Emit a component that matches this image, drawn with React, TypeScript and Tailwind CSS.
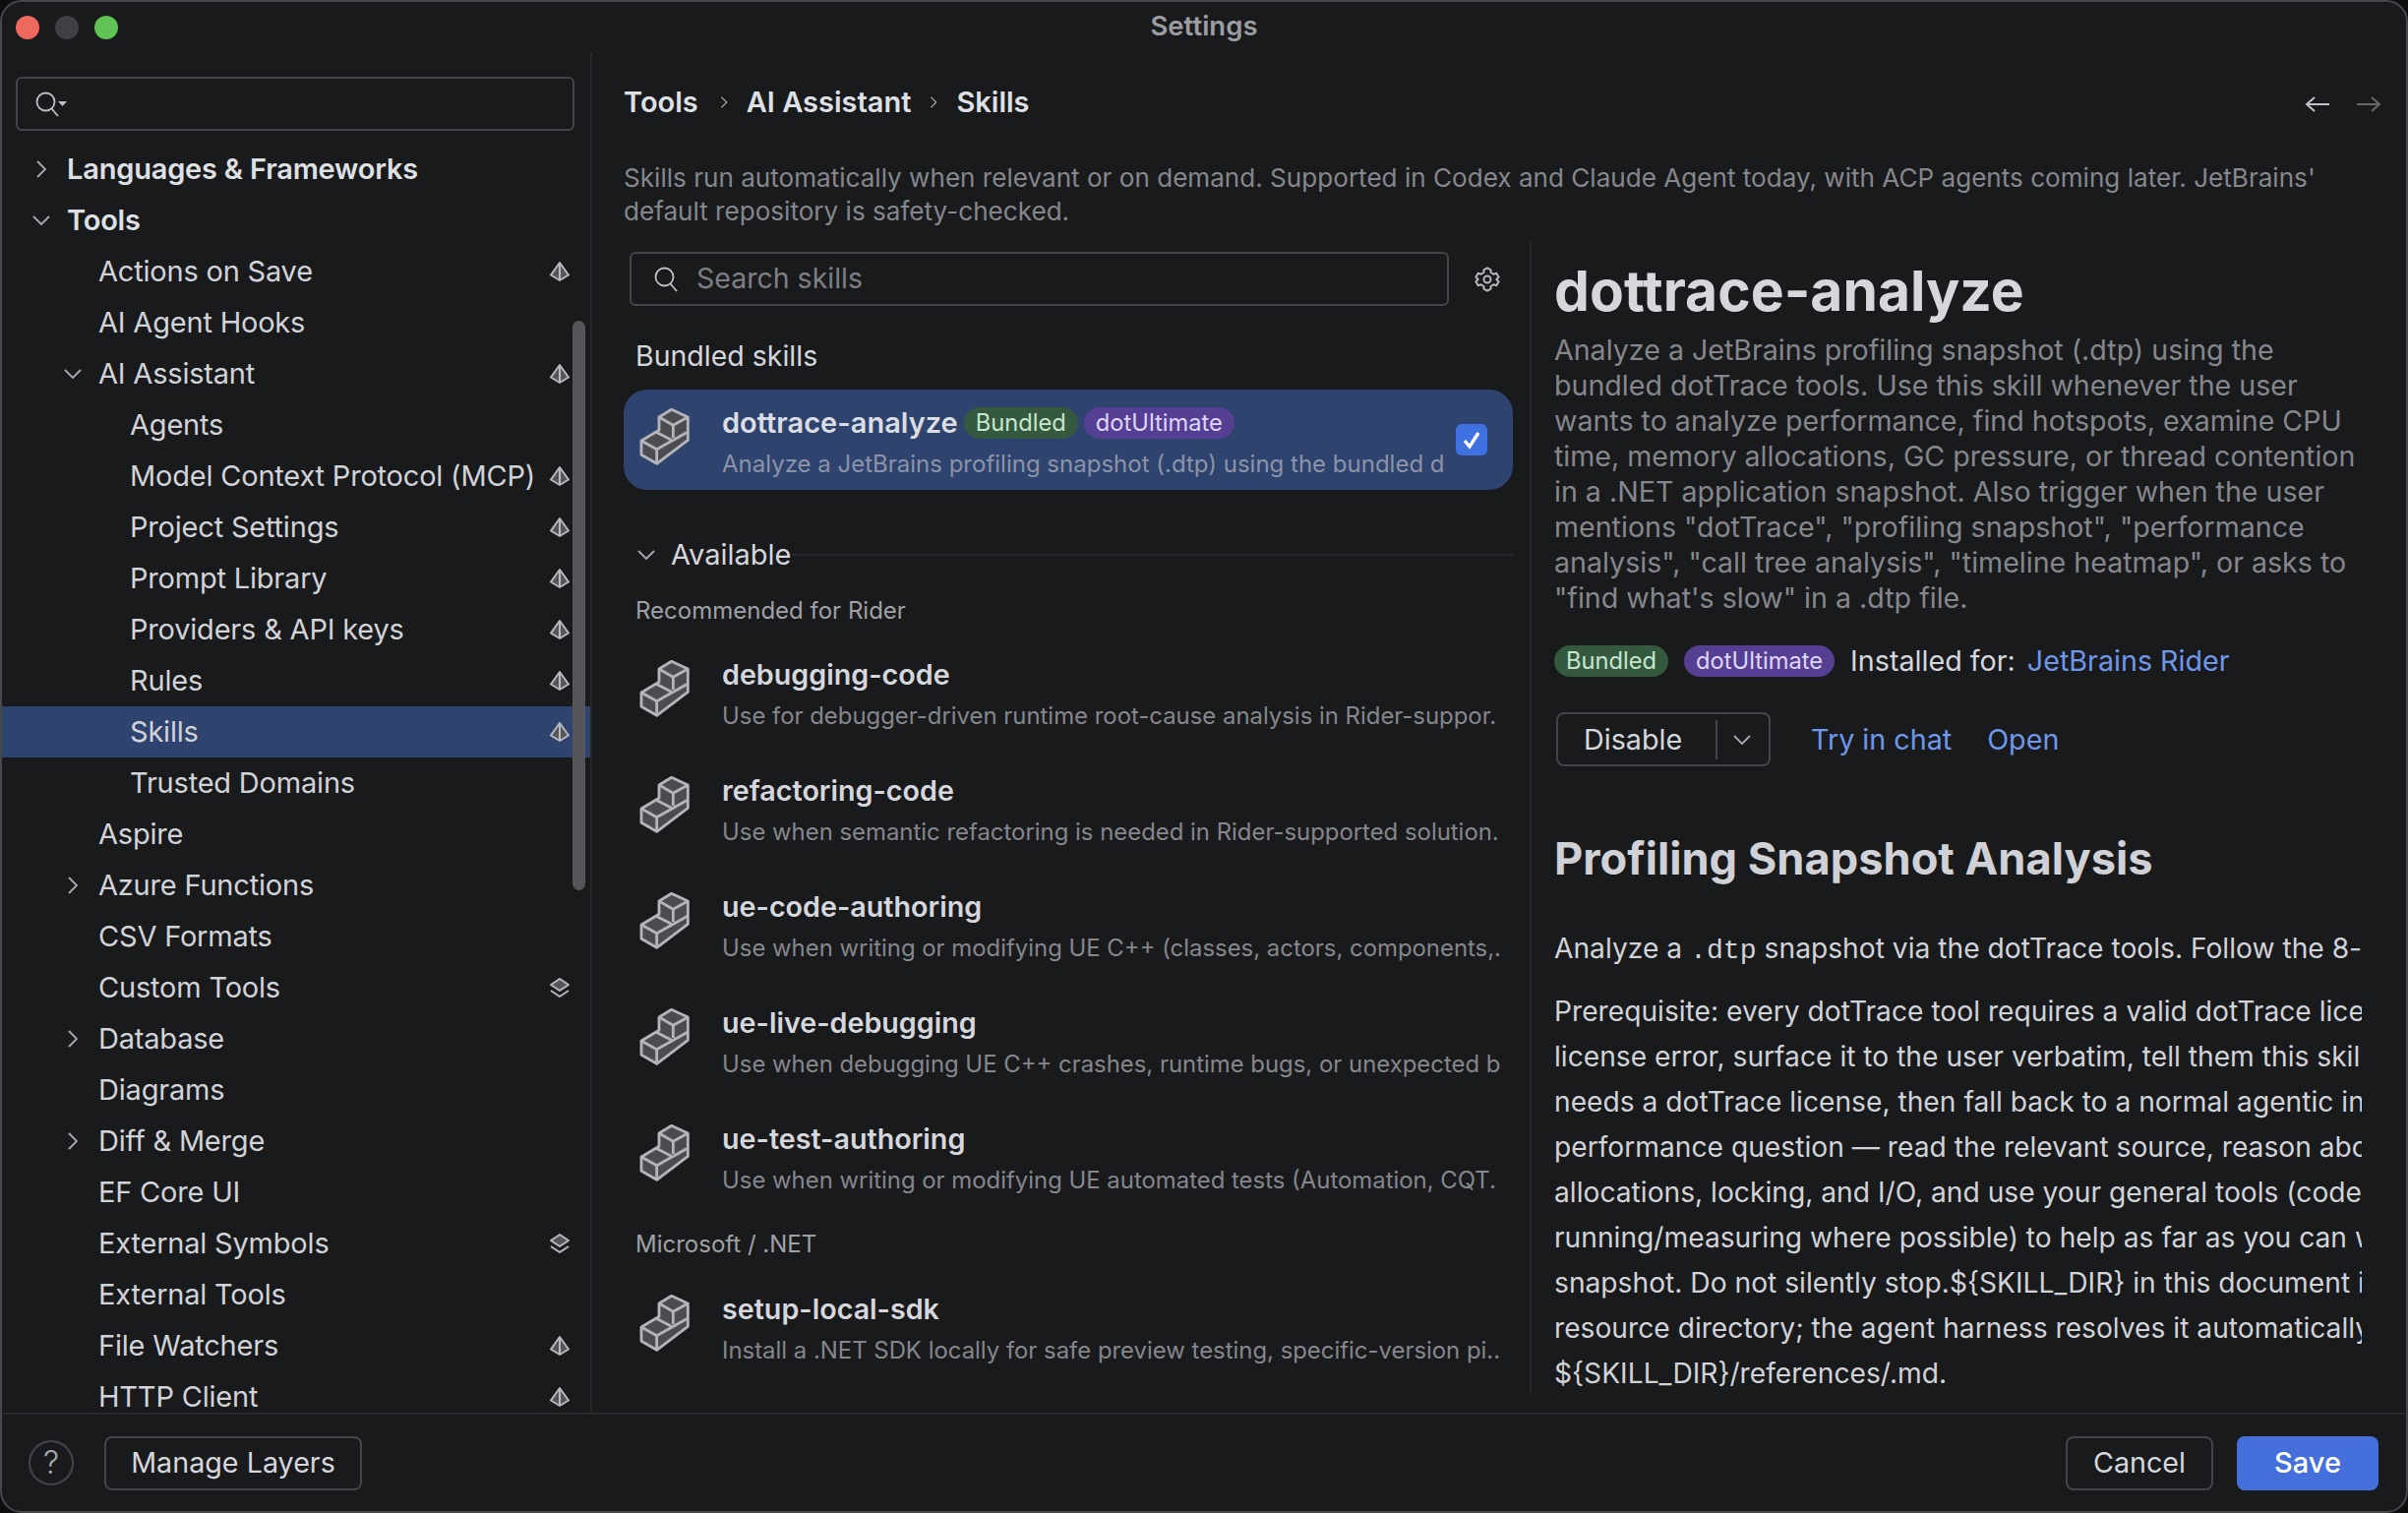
import React from "react";

const Pyramid = () => (
  <svg width="22" height="22" viewBox="0 0 22 22" className="shrink-0">
    <path d="M11 2 L20 14.5 L11 20 L2 14.5 Z" fill="#55565b" stroke="#b8b9be" strokeWidth="2" strokeLinejoin="round" />
    <path d="M11 2 V20" stroke="#b8b9be" strokeWidth="2" />
  </svg>
);
const Stack = () => (
  <svg width="22" height="22" viewBox="0 0 22 22" className="shrink-0">
    <path d="M11 2 L20 8 L11 14 L2 8 Z" fill="#55565b" stroke="#b8b9be" strokeWidth="2" strokeLinejoin="round" />
    <path d="M2 14 L11 20 L20 14" fill="none" stroke="#b8b9be" strokeWidth="2" strokeLinejoin="round" />
  </svg>
);
const Chevron = ({ open, size = 24 }: { open?: boolean; size?: number }) => (
  <svg width={size} height={size} viewBox="0 0 18 18" className="shrink-0">
    <path d={open ? "M3 6 L9 12 L15 6" : "M6 3 L12 9 L6 15"} fill="none" stroke="#a8a9ae" strokeWidth="1.4" />
  </svg>
);
const Blocks = () => (
  <svg width="54" height="60" viewBox="30 90 160 180" className="mb-[6px] shrink-0">
    <path d="M130 97 L180 120 V190 L85 262 L38 235 V192 L92 160 V120 Z" fill="#4b4c52" stroke="#b4b5ba" strokeWidth="8.5" strokeLinejoin="round" />
    <path d="M92 120 L135 145 L180 120 M135 145 V183 M38 192 L85 218 L180 165 M85 218 V262 M82 165 L130 190" fill="none" stroke="#b4b5ba" strokeWidth="8.5" strokeLinejoin="round" />
  </svg>
);
const SearchIcon = ({ caret }: { caret?: boolean }) => (
  <svg width={caret ? 34 : 26} height="28" viewBox={caret ? "0 0 34 28" : "0 0 26 28"} className="shrink-0">
    <circle cx="11.5" cy="11.5" r="9" fill="none" stroke="#c0c1c6" strokeWidth="1.8" />
    <path d="M17.5 18.5 L24 26" stroke="#c0c1c6" strokeWidth="1.8" />
    {caret && <path d="M24 11 H33 L28.5 16 Z" fill="#c0c1c6" />}
  </svg>
);
const Gear = () => (
  <svg width="28" height="28" viewBox="0 0 24 24" fill="none" stroke="#b8b9be" strokeWidth="1.7" strokeLinejoin="round" className="shrink-0">
    <path d="M12 2 L15 3.8 V6 L17.8 7.6 L20 6.6 L22 10 L20 12 L22 14 L20 17.4 L17.8 16.4 L15 18 V20.2 L12 22 L9 20.2 V18 L6.2 16.4 L4 17.4 L2 14 L4 12 L2 10 L4 6.6 L6.2 7.6 L9 6 V3.8 Z" />
    <circle cx="12" cy="12" r="3" />
  </svg>
);
const Arrow = ({ right, color }: { right?: boolean; color: string }) => (
  <svg width="28" height="22" viewBox="0 0 28 22" fill="none" stroke={color} strokeWidth="2" className="shrink-0">
    {right ? <path d="M2 11 H25 M17 4 L25 11 L17 18" /> : <path d="M26 11 H3 M11 4 L3 11 L11 18" />}
  </svg>
);

type Row = { t: string; d: number; c?: "o" | "c"; i?: "p" | "s"; b?: boolean; sel?: boolean };
const rows: Row[] = [
  { t: "Languages & Frameworks", d: 0, c: "c", b: true },
  { t: "Tools", d: 0, c: "o", b: true },
  { t: "Actions on Save", d: 1, i: "p" },
  { t: "AI Agent Hooks", d: 1 },
  { t: "AI Assistant", d: 1, c: "o", i: "p" },
  { t: "Agents", d: 2 },
  { t: "Model Context Protocol (MCP)", d: 2, i: "p" },
  { t: "Project Settings", d: 2, i: "p" },
  { t: "Prompt Library", d: 2, i: "p" },
  { t: "Providers & API keys", d: 2, i: "p" },
  { t: "Rules", d: 2, i: "p" },
  { t: "Skills", d: 2, i: "p", sel: true },
  { t: "Trusted Domains", d: 2 },
  { t: "Aspire", d: 1 },
  { t: "Azure Functions", d: 1, c: "c" },
  { t: "CSV Formats", d: 1 },
  { t: "Custom Tools", d: 1, i: "s" },
  { t: "Database", d: 1, c: "c" },
  { t: "Diagrams", d: 1 },
  { t: "Diff & Merge", d: 1, c: "c" },
  { t: "EF Core UI", d: 1 },
  { t: "External Symbols", d: 1, i: "s" },
  { t: "External Tools", d: 1 },
  { t: "File Watchers", d: 1, i: "p" },
  { t: "HTTP Client", d: 1, i: "p" },
];

const TreeRow = ({ r }: { r: Row }) => {
  const chevPad = r.d === 0 ? "pl-[31px]" : r.d === 1 ? "pl-[63px]" : "pl-[95px]";
  return (
    <div className={`flex h-[52px] shrink-0 items-center pr-[20px] ${r.sel ? "bg-[#2e436e]" : ""} ${chevPad}`}>
      <div className="flex w-[35px] shrink-0 items-center">
        {r.c && <span className="-ml-[3px]"><Chevron open={r.c === "o"} /></span>}
      </div>
      <span className={`flex-1 whitespace-nowrap text-[29px] tracking-[-0.2px] ${r.b ? "font-semibold text-[#dfe0e4]" : "text-[#d2d3d8]"}`}>{r.t}</span>
      {r.i === "p" && <Pyramid />}
      {r.i === "s" && <Stack />}
    </div>
  );
};

const skills = [
  ["debugging-code", "Use for debugger-driven runtime root-cause analysis in Rider-suppor."],
  ["refactoring-code", "Use when semantic refactoring is needed in Rider-supported solution."],
  ["ue-code-authoring", "Use when writing or modifying UE C++ (classes, actors, components,."],
  ["ue-live-debugging", "Use when debugging UE C++ crashes, runtime bugs, or unexpected b"],
  ["ue-test-authoring", "Use when writing or modifying UE automated tests (Automation, CQT."],
];

const SkillRow = ({ t, d }: { t: string; d: string }) => (
  <div className="flex h-[118px] shrink-0 items-center pl-[15px]">
    <Blocks />
    <div className="mt-[6px] ml-[31px] min-w-0 flex-1">
      <div className="text-[28.7px] leading-[40px] font-semibold text-[#d6d7dc]">{t}</div>
      <div className="mt-[4px] overflow-hidden text-[23.9px] leading-[36px] whitespace-nowrap text-[#85878c]">{d}</div>
    </div>
  </div>
);

const Chip = ({ t, purple }: { t: string; purple?: boolean }) => (
  <span className={`flex h-[32px] items-center rounded-[16px] px-[12px] text-[23.7px] ${purple ? "bg-[#553f93] text-[#dfd6fa]" : "bg-[#34593f] text-[#c8e6ce]"}`}>{t}</span>
);

const para = [
  "Prerequisite: every dotTrace tool requires a valid dotTrace license. If a tool returns a",
  "license error, surface it to the user verbatim, tell them this skill",
  "needs a dotTrace license, then fall back to a normal agentic investigation of the",
  "performance question — read the relevant source, reason about",
  "allocations, locking, and I/O, and use your general tools (code search,",
  "running/measuring where possible) to help as far as you can without a",
  "snapshot. Do not silently stop.${SKILL_DIR} in this document is the skill's",
  "resource directory; the agent harness resolves it automatically.",
  "${SKILL_DIR}/references/.md.",
];

const desc = [
  "Analyze a JetBrains profiling snapshot (.dtp) using the",
  "bundled dotTrace tools. Use this skill whenever the user",
  "wants to analyze performance, find hotspots, examine CPU",
  "time, memory allocations, GC pressure, or thread contention",
  "in a .NET application snapshot. Also trigger when the user",
  'mentions "dotTrace", "profiling snapshot", "performance',
  'analysis", "call tree analysis", "timeline heatmap", or asks to',
  '"find what\'s slow" in a .dtp file.',
];

export default function App() {
  return (
    <div className="h-[1538px] w-[2448px] overflow-hidden bg-[#0d0e10] font-['Inter','Liberation_Sans',sans-serif]">
      <div className="flex h-full w-full flex-col overflow-hidden rounded-[22px] border-2 border-[#46474b] bg-[#191a1c]">
        <div className="relative flex h-[52px] shrink-0 items-center justify-center pb-[2px]">
          <div className="absolute top-[14px] left-[14px] flex gap-[16px]">
            <span className="h-[24px] w-[24px] rounded-full bg-[#ee6a5f]" />
            <span className="h-[24px] w-[24px] rounded-full bg-[#404144]" />
            <span className="h-[24px] w-[24px] rounded-full bg-[#5fc454]" />
          </div>
          <span className="text-[27.5px] font-semibold text-[#9b9da2]">Settings</span>
        </div>

        <div className="flex min-h-0 flex-1">
          <aside className="relative flex w-[600px] shrink-0 flex-col overflow-hidden border-r-2 border-[#26272a]">
            <div className="mt-[24px] mr-[16px] ml-[14px] flex h-[55px] shrink-0 items-center rounded-[6px] border-2 border-[#44454a] pl-[17px]">
              <SearchIcon caret />
            </div>
            <div className="mt-[13px]">
              {rows.map((r) => <TreeRow key={r.t} r={r} />)}
            </div>
            <div className="absolute top-[272px] right-[5px] h-[579px] w-[13px] rounded-full bg-[#55565a]" />
          </aside>

          <main className="flex min-w-0 flex-1 flex-col pl-[32px]">
            <div className="flex h-[72px] shrink-0 items-center pt-[27px] pr-[24px]">
              <span className="text-[29px] font-semibold text-[#dfe0e4]">Tools</span>
              <span className="mr-[15px] ml-[18px]"><Chevron size={16} /></span>
              <span className="text-[29px] font-semibold text-[#dfe0e4]">AI Assistant</span>
              <span className="mx-[15px]"><Chevron size={16} /></span>
              <span className="text-[29px] font-semibold text-[#dfe0e4]">Skills</span>
              <div className="ml-auto flex gap-[24px] pt-[4px]">
                <Arrow color="#c2c3c8" />
                <Arrow right color="#66676b" />
              </div>
            </div>
            <p className="mt-[38px] w-[1760px] text-[26.1px] leading-[34px] text-[#85878c]">
              Skills run automatically when relevant or on demand. Supported in Codex and Claude Agent today, with ACP agents coming later. JetBrains' default repository is safety-checked.
            </p>

            <div className="mt-[10px] flex min-h-0 flex-1">
              <section className="flex w-[921px] shrink-0 flex-col overflow-hidden pr-[17px]">
                <div className="mt-[14px] ml-[6px] flex shrink-0 items-center">
                  <div className="flex h-[55px] w-[833px] items-center rounded-[6px] border-2 border-[#44454a] pl-[22px]">
                    <SearchIcon />
                    <span className="ml-[18px] text-[28.5px] text-[#7d7f84]">Search skills</span>
                  </div>
                  <span className="ml-[25px]"><Gear /></span>
                </div>
                <div className="mt-[33px] ml-[12px] shrink-0 text-[28.5px] leading-[36px] text-[#d6d7dc]">Bundled skills</div>
                <div className="mt-[16px] flex h-[102px] shrink-0 items-center rounded-[24px] bg-[#2e436e] pr-[26px] pl-[15px]">
                  <Blocks />
                  <div className="mt-[6px] ml-[31px] min-w-0 flex-1 overflow-hidden">
                    <div className="flex items-center gap-[6px]">
                      <span className="text-[29px] leading-[40px] font-semibold text-[#dcdde2]">dottrace-analyze</span>
                      <Chip t="Bundled" />
                      <Chip t="dotUltimate" purple />
                    </div>
                    <div className="mt-[4px] overflow-hidden text-[24px] leading-[36px] whitespace-nowrap text-[#8b93a8]">Analyze a JetBrains profiling snapshot (.dtp) using the bundled d</div>
                  </div>
                  <span className="ml-[12px] flex h-[32px] w-[32px] shrink-0 items-center justify-center rounded-[6px] bg-[#3f72e0]">
                    <svg width="22" height="22" viewBox="0 0 22 22"><path d="M4 12 L9 18 L18 4" fill="none" stroke="#fff" strokeWidth="3.4" /></svg>
                  </span>
                </div>
                <div className="mt-[48px] ml-[11px] flex h-[36px] shrink-0 items-center">
                  <Chevron open />
                  <span className="ml-[13px] text-[29px] text-[#d6d7dc]">Available</span>
                  <div className="h-[2px] flex-1 bg-[#26272a]" />
                </div>
                <div className="mt-[21px] mb-[5px] ml-[12px] shrink-0 text-[24px] leading-[36px] text-[#a0a1a6]">Recommended for Rider</div>
                {skills.map(([t, d]) => <SkillRow key={t} t={t} d={d} />)}
                <div className="mt-[13px] mb-[6px] ml-[12px] shrink-0 text-[24px] leading-[36px] text-[#a0a1a6]">Microsoft / .NET</div>
                <SkillRow t="setup-local-sdk" d="Install a .NET SDK locally for safe preview testing, specific-version pi.." />
              </section>

              <div className="mt-[4px] mb-[20px] w-[2px] shrink-0 bg-[#26272a]" />

              <section className="ml-[23px] w-[821px] shrink-0 overflow-hidden">
                <h1 className="mt-[20px] text-[57px] leading-[68px] font-bold whitespace-nowrap text-[#d6d7dc]">dottrace-analyze</h1>
                <div className="mt-[8px] text-[28.6px] leading-[36px] whitespace-nowrap text-[#85878c]">
                  {desc.map((l) => <div key={l}>{l}</div>)}
                </div>
                <div className="mt-[28px] flex h-[36px] items-center">
                  <Chip t="Bundled" />
                  <span className="w-[16px]" />
                  <Chip t="dotUltimate" purple />
                  <span className="ml-[16px] text-[28.7px] text-[#d6d7dc]">Installed for:</span>
                  <span className="ml-[12px] text-[28.7px] text-[#6f97ea]">JetBrains Rider</span>
                </div>
                <div className="mt-[34px] ml-[2px] flex items-center">
                  <div className="flex h-[55px] w-[218px] items-center rounded-[8px] border-2 border-[#44454a] pl-[26px]">
                    <span className="w-[134px] text-[28.7px] text-[#d6d7dc]">Disable</span>
                    <div className="h-[40px] w-[2px] bg-[#44454a]" />
                    <span className="ml-[13px]"><Chevron open /></span>
                  </div>
                  <span className="ml-[41px] text-[28.7px] text-[#6f97ea]">Try in chat</span>
                  <span className="ml-[36px] text-[28.7px] text-[#6f97ea]">Open</span>
                </div>
                <h2 className="mt-[64px] text-[45.2px] leading-[60px] font-bold whitespace-nowrap text-[#d0d1d6]">Profiling Snapshot Analysis</h2>
                <p className="mt-[38px] text-[28.2px] leading-[46px] whitespace-nowrap text-[#d2d3d8]">
                  Analyze a <span className="font-['Liberation_Mono',monospace]">.dtp</span> snapshot via the dotTrace tools. Follow the 8-step workflow below.
                </p>
                <div className="mt-[15px] text-[28.2px] leading-[46px] whitespace-nowrap text-[#d2d3d8]">
                  {para.map((l) => <div key={l}>{l}</div>)}
                </div>
              </section>
            </div>
          </main>
        </div>

        <footer className="flex h-[100px] shrink-0 items-center border-t-2 border-[#26272a] pr-[28px] pl-[27px]">
          <span className="flex h-[46px] w-[46px] items-center justify-center rounded-full border-2 border-[#44454a] text-[32px] font-light text-[#a8a9ae]">?</span>
          <span className="ml-[31px] flex h-[55px] w-[262px] items-center justify-center rounded-[8px] border-2 border-[#44454a] text-[28.7px] text-[#d6d7dc]">Manage Layers</span>
          <span className="ml-auto flex h-[55px] w-[150px] items-center justify-center rounded-[8px] border-2 border-[#44454a] text-[28.7px] text-[#d6d7dc]">Cancel</span>
          <span className="ml-[24px] flex h-[55px] w-[144px] items-center justify-center rounded-[8px] bg-[#4570db] text-[29px] font-medium text-white">Save</span>
        </footer>
      </div>
    </div>
  );
}
